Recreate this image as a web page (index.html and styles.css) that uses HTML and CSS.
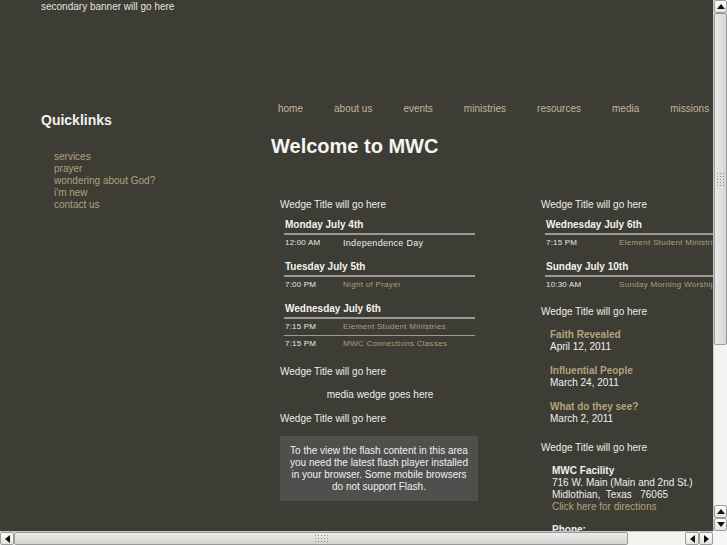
FILE: index.html
```html
<!DOCTYPE html>
<html>
<head>
<meta charset="utf-8">
<title>MWC</title>
<link rel="stylesheet" href="styles.css">
</head>
<body>
<div class="window">
  <div class="viewport">
    <div class="page">
      <div class="banner">secondary banner will go here</div>
      <div class="layout">
        <aside class="sidebar">
          <h2 class="ql-title">Quicklinks</h2>
          <ul class="quick">
            <li>services</li>
            <li>prayer</li>
            <li>wondering about God?</li>
            <li>i'm new</li>
            <li>contact us</li>
          </ul>
        </aside>
        <main class="main">
          <nav class="nav">
            <span>home</span><span>about us</span><span>events</span><span>ministries</span><span>resources</span><span>media</span><span>missions</span>
          </nav>
          <h1 class="welcome">Welcome to MWC</h1>
          <div class="cols">
            <div class="col col-a">
              <div class="wt">Wedge Title will go here</div>
              <div class="events">
                <div class="day">
                  <div class="day-h">Monday July 4th</div>
                  <div class="row"><span class="time">12:00 AM</span><span class="what white">Independence Day</span></div>
                </div>
                <div class="day">
                  <div class="day-h">Tuesday July 5th</div>
                  <div class="row"><span class="time">7:00 PM</span><span class="what">Night of Prayer</span></div>
                </div>
                <div class="day">
                  <div class="day-h">Wednesday July 6th</div>
                  <div class="row"><span class="time">7:15 PM</span><span class="what">Element Student Ministries</span></div>
                  <div class="row"><span class="time">7:15 PM</span><span class="what">MWC Connections Classes</span></div>
                </div>
              </div>
              <div class="wt wt-2">Wedge Title will go here</div>
              <div class="media-wedge">media wedge goes here</div>
              <div class="wt wt-3">Wedge Title will go here</div>
              <div class="flash">To the view the flash content in this area<br>you need the latest flash player installed<br>in your browser. Some mobile browsers<br>do not support Flash.</div>
            </div>
            <div class="col col-b">
              <div class="wt">Wedge Title will go here</div>
              <div class="events events-wide">
                <div class="day">
                  <div class="day-h">Wednesday July 6th</div>
                  <div class="row"><span class="time">7:15 PM</span><span class="what">Element Student Ministries</span></div>
                </div>
                <div class="day">
                  <div class="day-h">Sunday July 10th</div>
                  <div class="row"><span class="time">10:30 AM</span><span class="what">Sunday Morning Worship</span></div>
                </div>
              </div>
              <div class="wt wt-b2">Wedge Title will go here</div>
              <div class="sermons">
                <div class="sermon"><div class="s-title">Faith Revealed</div><div class="s-date">April 12, 2011</div></div>
                <div class="sermon"><div class="s-title">Influential People</div><div class="s-date">March 24, 2011</div></div>
                <div class="sermon"><div class="s-title">What do they see?</div><div class="s-date">March 2, 2011</div></div>
              </div>
              <div class="wt wt-b3">Wedge Title will go here</div>
              <div class="address">
                <div class="a-bold">MWC Facility</div>
                <div>716 W. Main (Main and 2nd St.)</div>
                <div>Midlothian,&nbsp; Texas &nbsp; 76065</div>
                <div class="a-link">Click here for directions</div>
                <div class="a-bold a-phone">Phone:</div>
              </div>
            </div>
          </div>
        </main>
      </div>
    </div>
  </div>
  <div class="vscroll">
    <div class="btn"><svg width="8" height="5" viewBox="0 0 8 5"><polygon points="0,5 8,5 4,0" fill="#111"/></svg></div>
    <div class="thumb vthumb"><span class="grip vgrip"></span></div>
    <div class="track"></div>
    <div class="btn"><svg width="8" height="5" viewBox="0 0 8 5"><polygon points="0,5 8,5 4,0" fill="#111"/></svg></div>
    <div class="btn"><svg width="8" height="5" viewBox="0 0 8 5"><polygon points="0,0 8,0 4,5" fill="#111"/></svg></div>
  </div>
  <div class="hscroll">
    <div class="btn"><svg width="5" height="8" viewBox="0 0 5 8"><polygon points="5,0 5,8 0,4" fill="#111"/></svg></div>
    <div class="thumb hthumb"><span class="grip hgrip"></span></div>
    <div class="track"></div>
    <div class="btn"><svg width="5" height="8" viewBox="0 0 5 8"><polygon points="5,0 5,8 0,4" fill="#111"/></svg></div>
    <div class="btn"><svg width="5" height="8" viewBox="0 0 5 8"><polygon points="0,0 0,8 5,4" fill="#111"/></svg></div>
  </div>
  <div class="corner"></div>
</div>
</body>
</html>
```

FILE: styles.css
```css
html, body {
  margin: 0;
  padding: 0;
  overflow: hidden;
  background: #ffffff;
}
body {
  font-family: "Liberation Sans", Arial, sans-serif;
}
.window {
  width: 727px;
  height: 545px;
  display: grid;
  grid-template-columns: 713px 14px;
  grid-template-rows: 531px 14px;
}
.viewport {
  overflow: hidden;
  background: #3d3c35;
}
.page {
  width: 1000px;
  padding-top: 1px;
  color: #e6e6e2;
}
.banner {
  height: 100px;
  padding-left: 41px;
  font-size: 10px;
  line-height: 12px;
  color: #e4e4de;
}
.layout {
  display: flex;
}
.sidebar {
  width: 230px;
  padding-left: 41px;
  flex: none;
}
.ql-title {
  margin: 10px 0 0;
  font-size: 14px;
  line-height: 18px;
  font-weight: bold;
  color: #f2f2ee;
}
.quick {
  list-style: none;
  margin: 22px 0 0;
  padding: 0 0 0 13px;
  font-size: 10px;
  line-height: 12px;
  color: #b1a37f;
}
.main {
  flex: none;
  width: 729px;
}
.nav {
  display: flex;
  gap: 31px;
  padding-left: 7px;
  margin-top: 1px;
  font-size: 10px;
  line-height: 14px;
  color: #c1b79b;
}
.welcome {
  margin: 18px 0 0;
  font-size: 20px;
  line-height: 24px;
  font-weight: bold;
  color: #f4f4f2;
}
.cols {
  display: flex;
  gap: 61px;
  padding-left: 9px;
  margin-top: 40px;
}
.col-a {
  width: 200px;
  flex: none;
}
.col-b {
  width: 300px;
  flex: none;
}
.wt {
  font-size: 10px;
  line-height: 14px;
  color: #ececea;
}
.events {
  margin: 6px 0 0 4px;
  width: 191px;
}
.events-wide {
  width: 245px;
}
.day + .day {
  margin-top: 9px;
}
.day-h {
  font-size: 10px;
  font-weight: bold;
  line-height: 14px;
  padding: 0 0 1px 1px;
  border-bottom: 2px solid #9b9a94;
  color: #f2f2f0;
}
.row {
  display: flex;
  height: 16px;
  line-height: 16px;
  padding-left: 1px;
}
.row + .row {
  border-top: 1px solid #9b9a94;
}
.time {
  width: 58px;
  flex: none;
  font-size: 8px;
  letter-spacing: 0.2px;
  color: #e8e8e4;
}
.events-wide .time {
  width: 73px;
}
.what {
  font-size: 8px;
  letter-spacing: 0.3px;
  color: #ad9f7d;
  white-space: nowrap;
}
.what.white {
  font-size: 9px;
  color: #eeeeea;
}
.wt-2 {
  margin-top: 13px;
}
.media-wedge {
  margin-top: 9px;
  text-align: center;
  font-size: 10px;
  line-height: 14px;
  color: #ececea;
}
.wt-3 {
  margin-top: 10px;
}
.flash {
  margin-top: 10px;
  width: 198px;
  padding: 9px 0 8px;
  background: #4f4f4d;
  text-align: center;
  font-size: 10px;
  line-height: 12px;
  color: #f0f0f0;
}
.wt-b2 {
  margin-top: 12px;
}
.sermons {
  margin: 10px 0 0 9px;
}
.sermon + .sermon {
  margin-top: 12px;
}
.s-title {
  font-size: 10px;
  font-weight: bold;
  line-height: 12px;
  color: #b4a37c;
}
.s-date {
  font-size: 10px;
  line-height: 12px;
  color: #f0f0ee;
}
.wt-b3 {
  margin-top: 16px;
}
.address {
  margin: 10px 0 0 11px;
  font-size: 10px;
  line-height: 12px;
  color: #efefed;
  white-space: nowrap;
}
.a-bold {
  font-weight: bold;
}
.a-link {
  color: #b4a37c;
}
.a-phone {
  margin-top: 11px;
}

/* scrollbars */
.vscroll {
  display: flex;
  flex-direction: column;
  background: #f3f3f1;
  border-left: 1px solid #c8c8c6;
}
.hscroll {
  display: flex;
  background: #f3f3f1;
  border-top: 1px solid #c8c8c6;
}
.corner {
  background: #f6f6f4;
}
.btn {
  flex: none;
  display: flex;
  align-items: center;
  justify-content: center;
  background: linear-gradient(#fbfbfa, #e4e4e2);
  border: 1px solid #9d9d9b;
  border-radius: 2px;
  box-sizing: border-box;
}
.vscroll .btn {
  height: 13px;
}
.hscroll .btn {
  width: 14px;
}
.thumb {
  flex: none;
  box-sizing: border-box;
  border: 1px solid #9a9a98;
  border-radius: 2px;
  display: flex;
  align-items: center;
  justify-content: center;
}
.vthumb {
  height: 332px;
  background: linear-gradient(90deg, #e9e9e7, #d6d6d4);
}
.hthumb {
  width: 614px;
  background: linear-gradient(#ececea, #d4d4d2);
}
.track {
  flex: 1;
}
.vscroll .track {
  margin-bottom: 2px;
}
.hscroll .track {
  margin-right: 2px;
}
.grip {
  display: block;
  background-image: radial-gradient(circle, #8e8e8c 0.6px, transparent 0.9px);
  background-size: 3px 3px;
}
.vgrip {
  width: 9px;
  height: 15px;
}
.hgrip {
  width: 15px;
  height: 9px;
}
```
